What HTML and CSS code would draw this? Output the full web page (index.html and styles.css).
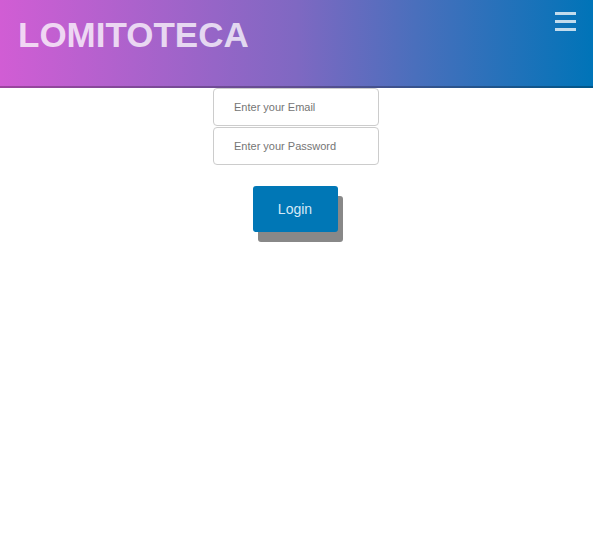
FILE: index.html
```html
<!DOCTYPE html>
<html>
<head>
<meta charset="utf-8">
<link rel="stylesheet" href="styles.css">
</head>
<body>
<header class="topbar">
  <h1 class="brand">LOMITOTECA</h1>
  <span class="menu" aria-label="Menu"><i class="bar"></i><i class="bar"></i><i class="bar"></i></span>
</header>
<main class="login">
  <form class="form">
    <input class="field" type="email" placeholder="Enter your Email">
    <input class="field" type="password" placeholder="Enter your Password">
    <button class="btn" type="button">Login</button>
  </form>
</main>
</body>
</html>
```
FILE: styles.css
```css
* { box-sizing: border-box; }
html, body { min-height: 100%; }
body {
  margin: 0;
  font-family: "Liberation Sans", Arial, sans-serif;
  background: #fff;
}
.topbar {
  height: 88px;
  display: flex;
  justify-content: space-between;
  align-items: flex-start;
  background: linear-gradient(to right, #d15dd4 0%, #7f68c2 50%, #4a6fbc 70%, #0074b8 100%);
  border-bottom: 2px solid rgba(0, 0, 0, 0.25);
}
.brand {
  margin: 14px 0 0 18px;
  font-size: 35px;
  font-weight: bold;
  color: rgba(255, 255, 255, 0.75);
  line-height: 42px;
}
.menu {
  margin: 12px 17px 0 0;
  width: 21px;
  display: flex;
  flex-direction: column;
  gap: 5px;
}
.bar {
  display: block;
  height: 3px;
  background: rgba(255, 255, 255, 0.75);
}
.login {
  display: flex;
  justify-content: center;
  padding-bottom: 40px;
}
.form {
  display: flex;
  flex-direction: column;
  align-items: center;
  gap: 1px;
  margin-left: -1px;
}
.field {
  width: 166px;
  height: 38px;
  border: 1px solid #ccc;
  border-radius: 4px;
  padding: 0 0 0 20px;
  font-family: "Liberation Sans", Arial, sans-serif;
  font-size: 11px;
  color: #333;
  background: #fff;
}
.field::placeholder { color: #757575; }
.btn {
  margin: 20px 0 0 -2px;
  width: 85px;
  height: 46px;
  border: none;
  border-radius: 3px;
  background: #0077b6;
  color: #d4e9f7;
  font-family: "Liberation Sans", Arial, sans-serif;
  font-size: 14px;
  box-shadow: 5px 10px #888;
}
```
